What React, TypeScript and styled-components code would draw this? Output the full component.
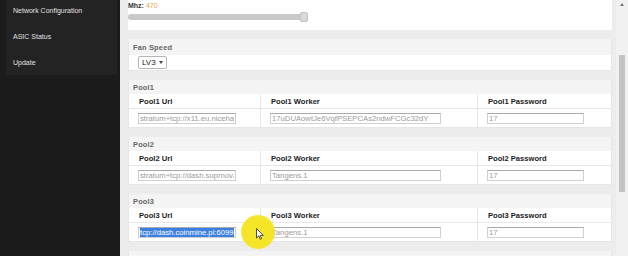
import styled, { createGlobalStyle } from "styled-components";

const GlobalStyle = createGlobalStyle`
  html, body {
    margin: 0;
    padding: 0;
    overflow: hidden;
    background: #1b1b1b;
    font-family: "Liberation Sans", Arial, sans-serif;
  }
`;

const Page = styled.div`
  position: relative;
  display: flex;
  width: 628px;
  height: 256px;
  overflow: hidden;
`;

// --- sidebar ---
const Sidebar = styled.aside`
  width: 120px;
  flex-shrink: 0;
  background: #1b1b1b;
  padding: 0 3px 0 6px;
  box-sizing: border-box;
`;

const Menu = styled.ul`
  list-style: none;
  margin: -3px 0 0;
  padding: 0;
  background: #232323;
`;

const MenuItem = styled.li`
  height: 26px;
  display: flex;
  align-items: center;
  padding-left: 7px;
  font-size: 7px;
  color: #e2e2e2;
`;

// --- main column ---
const Main = styled.main`
  flex: 1;
  display: flex;
  background: #ececec;
`;

const Content = styled.div`
  flex: 1;
  display: flex;
  flex-direction: column;
  padding: 0 4px 0 8px;
`;

const Panel = styled.section<{ $gap?: number }>`
  background: #fff;
  margin-top: ${(p) => p.$gap ?? 9}px;
  border: 1px solid #e6e6e6;
  border-top: none;
  flex-shrink: 0;
`;

const TopPanel = styled.section`
  background: #fff;
  height: 30px;
  padding-top: 1px;
  box-sizing: border-box;
  flex-shrink: 0;
`;

const Mhz = styled.div`
  font-size: 7px;
  font-weight: bold;
  color: #333;
  line-height: 9px;
  span {
    font-weight: normal;
    color: #f0a23c;
  }
`;

const SliderTrack = styled.div`
  width: 180px;
  height: 6px;
  margin-top: 4px;
  border-radius: 3px;
  background: #c9c9c9;
  display: flex;
  justify-content: flex-end;
  align-items: center;
`;

const SliderThumb = styled.div`
  width: 8px;
  height: 10px;
  border-radius: 2px;
  background: #d9d9d9;
  border: 1px solid #c2c2c2;
  box-sizing: border-box;
`;

const PanelHeader = styled.div<{ $h?: number }>`
  height: ${(p) => p.$h ?? 14}px;
  background: #f4f4f4;
  display: flex;
  align-items: center;
  padding-left: 4px;
  font-size: 7.4px;
  font-weight: bold;
  color: #666;
  letter-spacing: 0.2px;
`;

const FanBody = styled.div`
  height: 15px;
  display: flex;
  align-items: center;
  padding-left: 9px;
`;

const Select = styled.div`
  display: flex;
  align-items: center;
  gap: 3px;
  height: 11px;
  padding: 0 3px;
  border: 1px solid #b5b5b5;
  border-radius: 2px;
  font-size: 8px;
  color: #222;
  &::after {
    content: "";
    border-left: 2px solid transparent;
    border-right: 2px solid transparent;
    border-top: 3px solid #444;
  }
`;

const Grid = styled.div`
  display: grid;
  grid-template-columns: 131px 217px 1fr;
`;

const Cell = styled.div<{ $head?: boolean }>`
  height: ${(p) => (p.$head ? 14 : 18)}px;
  display: flex;
  align-items: center;
  padding-left: ${(p) => (p.$head ? 10 : 9)}px;
  font-size: 7.6px;
  font-weight: bold;
  color: #222;
  border-top: ${(p) => (p.$head ? "none" : "1px solid #e8e8e8")};
  & + & {
    border-left: 1px solid #e8e8e8;
  }
  &:nth-child(4) {
    border-left: none;
  }
`;

const Field = styled.input<{ $w: number }>`
  width: ${(p) => p.$w}px;
  height: 11px;
  box-sizing: border-box;
  padding: 0 1px;
  margin: 0;
  border: 1px solid #cfcfcf;
  border-top-color: #a9a9a9;
  border-radius: 0;
  font-family: "Liberation Sans", Arial, sans-serif;
  font-size: 7.7px;
  color: #9a9a9a;
  background: #fff;
  outline: none;
`;

const FakeField = styled.div<{ $w: number }>`
  width: ${(p) => p.$w}px;
  height: 11px;
  box-sizing: border-box;
  padding: 0 1px;
  border: 1px solid #cfcfcf;
  border-top-color: #a9a9a9;
  overflow: hidden;
  white-space: nowrap;
  font-size: 7.7px;
  font-weight: normal;
  line-height: 9px;
`;

const Selection = styled.span`
  background: #3b7fe0;
  color: #fff;
`;

// --- scrollbar ---
const Scrollbar = styled.div`
  width: 12px;
  background: #f1f1f1;
  display: flex;
  flex-direction: column;
  align-items: center;
  padding-top: 3px;
  box-sizing: border-box;
  &::before {
    content: "";
    border-left: 2px solid transparent;
    border-right: 2px solid transparent;
    border-bottom: 3px solid #777;
  }
`;

const Thumb = styled.div`
  width: 6px;
  height: 137px;
  margin-top: 49px;
  background: #c3c3c3;
`;

// --- cursor highlight overlay ---
const Highlight = styled.div`
  position: absolute;
  left: 241px;
  top: 215px;
  width: 34px;
  height: 34px;
  border-radius: 50%;
  background: radial-gradient(circle, #f4e41e 60%, rgba(244, 228, 30, 0.85) 80%, rgba(244, 228, 30, 0) 100%);
  opacity: 0.95;
`;

const Pointer = styled.svg`
  position: absolute;
  left: 256px;
  top: 228px;
  width: 8px;
  height: 12px;
`;

type Pool = { n: number; url: string; worker: string; pass: string; selected?: boolean };

const pools: Pool[] = [
  { n: 1, url: "stratum+tcp://x11.eu.nicehash.com:3336", worker: "17uDUAowtJe6VqfPSEPCAs2ndwFCGc32dY", pass: "17" },
  { n: 2, url: "stratum+tcp://dash.suprnova.cc:9995", worker: "Tangens.1", pass: "17" },
  { n: 3, url: "tcp://dash.coinmine.pl:6099", worker: "Tangens.1", pass: "17", selected: true },
];

const PoolPanel = ({ pool }: { pool: Pool }) => (
  <Panel>
    <PanelHeader>Pool{pool.n}</PanelHeader>
    <Grid>
      <Cell $head>Pool{pool.n} Url</Cell>
      <Cell $head>Pool{pool.n} Worker</Cell>
      <Cell $head>Pool{pool.n} Password</Cell>
      <Cell>
        {pool.selected ? (
          <FakeField $w={98}>
            <Selection>{pool.url}</Selection>
          </FakeField>
        ) : (
          <Field $w={98} readOnly value={pool.url} />
        )}
      </Cell>
      <Cell>
        <Field $w={171} readOnly value={pool.worker} />
      </Cell>
      <Cell>
        <Field $w={97} readOnly value={pool.pass} />
      </Cell>
    </Grid>
  </Panel>
);

export default function App() {
  return (
    <Page>
      <GlobalStyle />
      <Sidebar>
        <Menu>
          <MenuItem>Network Configuration</MenuItem>
          <MenuItem>ASIC Status</MenuItem>
          <MenuItem>Update</MenuItem>
        </Menu>
      </Sidebar>
      <Main>
        <Content>
          <TopPanel>
            <Mhz>
              Mhz: <span>470</span>
            </Mhz>
            <SliderTrack>
              <SliderThumb />
            </SliderTrack>
          </TopPanel>
          <Panel $gap={9}>
            <PanelHeader $h={16}>Fan Speed</PanelHeader>
            <FanBody>
              <Select>LV3</Select>
            </FanBody>
          </Panel>
          {pools.map((p) => (
            <PoolPanel key={p.n} pool={p} />
          ))}
          <Panel>
            <PanelHeader />
          </Panel>
        </Content>
        <Scrollbar>
          <Thumb />
        </Scrollbar>
      </Main>
      <Highlight />
      <Pointer viewBox="0 0 8 12">
        <path d="M0.5 0.5 L0.5 10 L2.8 7.8 L4.3 11.3 L5.6 10.7 L4.2 7.4 L7.3 7.4 Z" fill="#fff" stroke="#222" strokeWidth="0.8" strokeLinejoin="round" />
      </Pointer>
    </Page>
  );
}
